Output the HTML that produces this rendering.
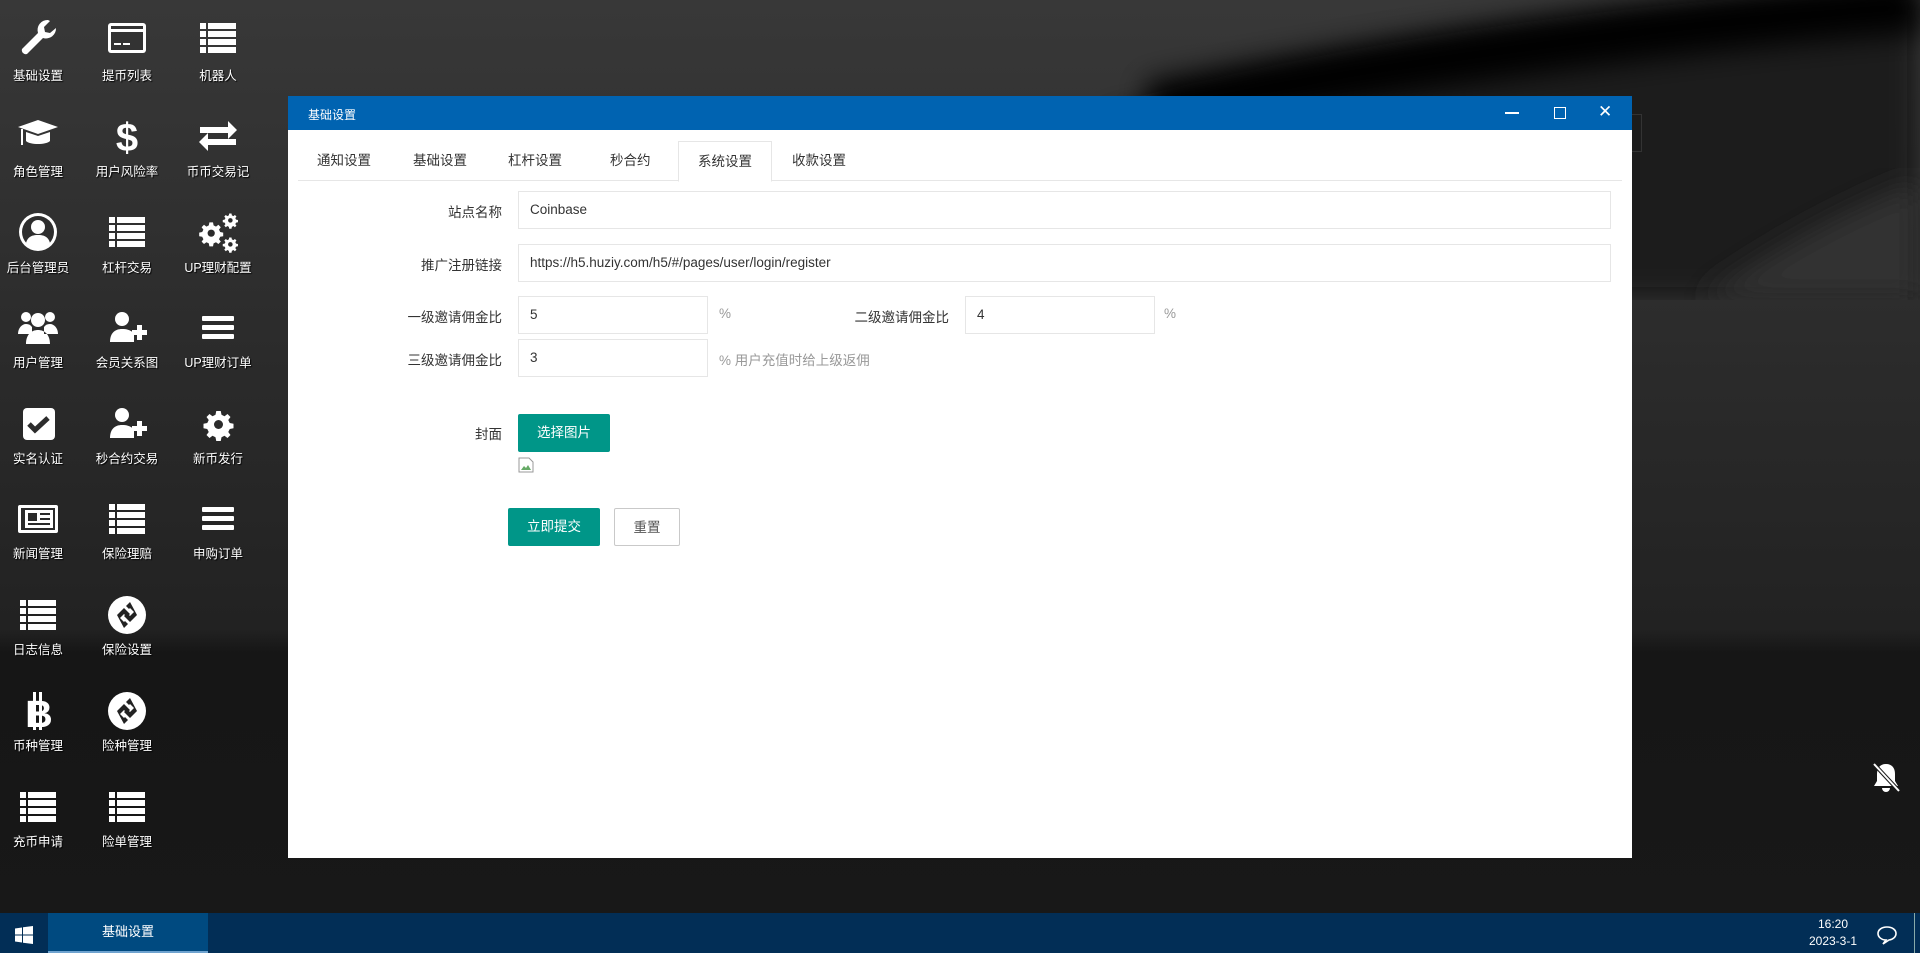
<!DOCTYPE html>
<html><head><meta charset="utf-8"><style>
*{margin:0;padding:0;box-sizing:border-box}
body{width:1920px;height:953px;overflow:hidden;position:relative;font-family:"Liberation Sans","Noto Sans CJK SC",sans-serif;
background:linear-gradient(180deg,#383838 0%,#2a2a2a 40%,#222 66%,#161616 68.5%,#181818 100%);}
.ic{position:absolute;width:90px;text-align:center;color:#fff;font-size:12.5px}
.ic svg{position:absolute;left:23px;width:44px;height:44px}
.ic span{position:absolute;left:0;width:90px;text-shadow:1px 1px 1px #000}
.win{position:absolute;left:288px;top:96px;width:1344px;height:762px;background:#fff}
.tb{height:34px;background:#0063b1;color:#fff;font-size:12px;padding:10px 20px;position:relative}
.tb .c{position:absolute;top:0;height:34px;color:#fff}
.tabs{position:absolute;top:45px;left:10px;right:10px;height:40px;border-bottom:1px solid #e6e6e6}
.tab{position:absolute;top:0;height:40px;line-height:40px;font-size:13.5px;color:#333}
.tab.a{border:1px solid #e6e6e6;border-bottom:1px solid #fff;background:#fff;height:41px;padding:0 19px}
.lb{position:absolute;font-size:13.5px;color:#333;text-align:right;width:200px}
.in{position:absolute;border:1px solid #e6e6e6;height:38px;line-height:36px;padding-left:11px;font-size:13.5px;color:#333}
.g{position:absolute;font-size:13.5px;color:#999}
.btn{position:absolute;height:38px;line-height:38px;text-align:center;color:#fff;background:#009688;font-size:13.5px;border-radius:2px}
.task{position:absolute;left:0;top:913px;width:1920px;height:40px;background:#022e56}
</style></head><body>
<svg style="position:absolute;left:0;top:0" width="1920" height="300" viewBox="0 0 1920 300">
<defs><filter id="bl"><feGaussianBlur stdDeviation="14"/></filter><linearGradient id="lg" x1="0" y1="0" x2="0" y2="1"><stop offset="0" stop-color="#3a3a3a"/><stop offset="1" stop-color="#333"/></linearGradient></defs>
<path d="M1100 120 C1400 40 1700 10 1920 0 L1920 300 L1100 300 Z" fill="#1c1c1c" filter="url(#bl)"/>
<path d="M1150 110 C1400 60 1700 20 1920 5" stroke="#030303" stroke-width="55" fill="none" filter="url(#bl)"/>
<path d="M1700 300 C1800 230 1870 200 1920 180 L1920 300Z" fill="#333" filter="url(#bl)"/>
</svg>
<svg width="0" height="0" style="position:absolute"><defs>
<g id="list"><rect x="4" y="7" width="6" height="6"/><rect x="12" y="7" width="28" height="6"/><rect x="4" y="15" width="6" height="6"/><rect x="12" y="15" width="28" height="6"/><rect x="4" y="23" width="6" height="6"/><rect x="12" y="23" width="28" height="6"/><rect x="4" y="31" width="6" height="6"/><rect x="12" y="31" width="28" height="6"/></g>
<g id="bars"><rect x="6" y="10" width="32" height="5" rx="1"/><rect x="6" y="19" width="32" height="5" rx="1"/><rect x="6" y="28" width="32" height="5" rx="1"/></g>
<g id="adduser"><circle cx="17" cy="13" r="7"/><path d="M5 36c0-9 5-13 12-13s10 2 12 5v8z"/><rect x="27" y="24" width="15" height="5"/><rect x="32" y="19" width="5" height="15"/></g>
<g id="link"><circle cx="22" cy="22" r="19"/><path d="M12 22l7-7 6 6-3 3-3-3-4 4 4 4 1-1 3 3-4 4zM32 22l-7 7-6-6 3-3 3 3 4-4-4-4-1 1-3-3 4-4z" fill="#222"/></g>
<g id="gear"><path d="M19 4h6l1 5 4 2 4-3 4 4-3 4 2 4 5 1v6l-5 1-2 4 3 4-4 4-4-3-4 2-1 5h-6l-1-5-4-2-4 3-4-4 3-4-2-4-5-1v-6l5-1 2-4-3-4 4-4 4 3 4-2z"/><circle cx="22" cy="22" r="6" fill="#2b2b2b"/></g>
</defs></svg>
<div style="fill:#fff">
<div class="ic" style="left:-7px;top:16px"><svg viewBox="0 0 44 44"><path d="M32 4a10 10 0 0 0-10 13L6 33a4 4 0 0 0 5 5l16-16a10 10 0 0 0 13-10l-6 5-5-1-1-5 6-6z" fill="#fff"/></svg><span style="top:49px">基础设置</span></div>
<div class="ic" style="left:82px;top:16px"><svg viewBox="0 0 44 44"><rect x="3" y="7" width="38" height="30" rx="3" fill="#fff"/><rect x="6" y="16" width="32" height="18" fill="#333"/><rect x="6" y="10" width="32" height="3" fill="#333"/><rect x="9" y="27" width="7" height="2" fill="#fff"/><rect x="18" y="27" width="7" height="2" fill="#fff"/></svg><span style="top:49px">提币列表</span></div>
<div class="ic" style="left:173px;top:16px"><svg viewBox="0 0 44 44"><use href="#list"/></svg><span style="top:49px">机器人</span></div>

<div class="ic" style="left:-7px;top:113px"><svg viewBox="0 0 44 44"><path d="M2 14L22 7l20 7-20 7z"/><path d="M10 19v9c4 4 20 4 24 0v-9l-12 4z"/><rect x="5" y="16" width="2" height="16"/></svg><span style="top:48px">角色管理</span></div>
<div class="ic" style="left:82px;top:113px"><svg viewBox="0 0 44 44"><text x="22" y="38" text-anchor="middle" font-size="40" font-weight="bold" fill="#fff" font-family="Liberation Sans">$</text></svg><span style="top:48px">用户风险率</span></div>
<div class="ic" style="left:173px;top:113px"><svg viewBox="0 0 44 44"><path d="M4 14h28v-6l9 9-9 9v-6H4zM40 26H12v-6l-9 9 9 9v-6h28z"/></svg><span style="top:48px">币币交易记</span></div>

<div class="ic" style="left:-7px;top:210px"><svg viewBox="0 0 44 44"><circle cx="22" cy="22" r="19"/><circle cx="22" cy="22" r="16" fill="#2e2e2e"/><circle cx="22" cy="17" r="7"/><path d="M10 33c2-7 7-8 12-8s10 1 12 8a16 16 0 0 1-24 0z"/></svg><span style="top:47px">后台管理员</span></div>
<div class="ic" style="left:82px;top:210px"><svg viewBox="0 0 44 44"><use href="#list"/></svg><span style="top:47px">杠杆交易</span></div>
<div class="ic" style="left:173px;top:210px"><svg viewBox="0 0 44 44"><g transform="translate(2,10) scale(.6)"><use href="#gear"/></g><g transform="translate(26,2) scale(.38)"><use href="#gear"/></g><g transform="translate(26,26) scale(.38)"><use href="#gear"/></g></svg><span style="top:47px">UP理财配置</span></div>

<div class="ic" style="left:-7px;top:306px"><svg viewBox="0 0 44 44"><circle cx="10" cy="11" r="5"/><circle cx="34" cy="11" r="5"/><circle cx="22" cy="14" r="7"/><path d="M2 28c0-6 4-10 8-10s5 2 6 3v7zM42 28c0-6-4-10-8-10s-5 2-6 3v7zM10 38c0-10 6-14 12-14s12 4 12 14z"/></svg><span style="top:46px">用户管理</span></div>
<div class="ic" style="left:82px;top:306px"><svg viewBox="0 0 44 44"><use href="#adduser"/></svg><span style="top:46px">会员关系图</span></div>
<div class="ic" style="left:173px;top:306px"><svg viewBox="0 0 44 44"><use href="#bars"/></svg><span style="top:46px">UP理财订单</span></div>

<div class="ic" style="left:-7px;top:402px"><svg viewBox="0 0 44 44"><rect x="7" y="6" width="32" height="32" rx="4"/><path d="M13 22l6 6 13-12" stroke="#2c2c2c" stroke-width="5" fill="none"/></svg><span style="top:46px">实名认证</span></div>
<div class="ic" style="left:82px;top:402px"><svg viewBox="0 0 44 44"><use href="#adduser"/></svg><span style="top:46px">秒合约交易</span></div>
<div class="ic" style="left:173px;top:402px"><svg viewBox="0 0 44 44"><g transform="translate(6,6) scale(.75)"><use href="#gear"/></g></svg><span style="top:46px">新币发行</span></div>

<div class="ic" style="left:-7px;top:497px"><svg viewBox="0 0 44 44"><rect x="2" y="8" width="40" height="28" rx="2"/><rect x="5" y="11" width="34" height="22" fill="#2a2a2a"/><rect x="9" y="13" width="28" height="18"/><rect x="12" y="16" width="9" height="8" fill="#2a2a2a"/><rect x="24" y="16" width="10" height="2" fill="#2a2a2a"/><rect x="24" y="21" width="10" height="2" fill="#2a2a2a"/><rect x="12" y="26" width="22" height="2" fill="#2a2a2a"/></svg><span style="top:46px">新闻管理</span></div>
<div class="ic" style="left:82px;top:497px"><svg viewBox="0 0 44 44"><use href="#list"/></svg><span style="top:46px">保险理赔</span></div>
<div class="ic" style="left:173px;top:497px"><svg viewBox="0 0 44 44"><use href="#bars"/></svg><span style="top:46px">申购订单</span></div>

<div class="ic" style="left:-7px;top:593px"><svg viewBox="0 0 44 44"><use href="#list"/></svg><span style="top:46px">日志信息</span></div>
<div class="ic" style="left:82px;top:593px"><svg viewBox="0 0 44 44"><use href="#link"/></svg><span style="top:46px">保险设置</span></div>

<div class="ic" style="left:-7px;top:689px"><svg viewBox="0 0 44 44"><text x="23" y="38" text-anchor="middle" font-size="38" font-weight="bold" fill="#fff" font-family="Liberation Sans">B</text><rect x="17" y="3" width="3" height="38"/><rect x="23" y="3" width="3" height="38"/></svg><span style="top:46px">币种管理</span></div>
<div class="ic" style="left:82px;top:689px"><svg viewBox="0 0 44 44"><use href="#link"/></svg><span style="top:46px">险种管理</span></div>

<div class="ic" style="left:-7px;top:785px"><svg viewBox="0 0 44 44"><use href="#list"/></svg><span style="top:46px">充币申请</span></div>
<div class="ic" style="left:82px;top:785px"><svg viewBox="0 0 44 44"><use href="#list"/></svg><span style="top:46px">险单管理</span></div>
</div>

<div style="position:absolute;left:1632px;top:114px;width:10px;height:38px;border:1px solid #333;border-left:none"></div>

<div class="win">
<div class="tb">基础设置
<span class="c" style="left:1217px;top:16px;width:14px;height:2px;background:#fff"></span>
<span class="c" style="left:1266px;top:11px;width:12px;height:12px;border:1.5px solid #fff;background:none"></span>
<span class="c" style="left:1310px;top:6px;font-size:17px;line-height:20px">✕</span>
</div>
<div class="tabs">
<div class="tab" style="left:19px">通知设置</div>
<div class="tab" style="left:115px">基础设置</div>
<div class="tab" style="left:210px">杠杆设置</div>
<div class="tab" style="left:312px">秒合约</div>
<div class="tab a" style="left:380px">系统设置</div>
<div class="tab" style="left:494px">收款设置</div>
</div>
<div class="lb" style="left:14px;top:105px">站点名称</div>
<div class="in" style="left:230px;top:95px;width:1093px">Coinbase</div>
<div class="lb" style="left:14px;top:158px">推广注册链接</div>
<div class="in" style="left:230px;top:148px;width:1093px">https://h5.huziy.com/h5/#/pages/user/login/register</div>
<div class="lb" style="left:14px;top:210px">一级邀请佣金比</div>
<div class="in" style="left:230px;top:200px;width:190px">5</div>
<div class="g" style="left:431px;top:210px">%</div>
<div class="lb" style="left:461px;top:210px">二级邀请佣金比</div>
<div class="in" style="left:677px;top:200px;width:190px">4</div>
<div class="g" style="left:876px;top:210px">%</div>
<div class="lb" style="left:14px;top:253px">三级邀请佣金比</div>
<div class="in" style="left:230px;top:243px;width:190px">3</div>
<div class="g" style="left:431px;top:253px">% 用户充值时给上级返佣</div>
<div class="lb" style="left:14px;top:327px">封面</div>
<div class="btn" style="left:230px;top:318px;width:92px">选择图片</div>
<svg style="position:absolute;left:230px;top:361px" width="16" height="16" viewBox="0 0 16 16"><path d="M1 1h10l4 4v10H1z" fill="#fff" stroke="#999"/><path d="M3 13l3-4 2 2 2-3 3 5z" fill="#6a6"/></svg>
<div class="btn" style="left:220px;top:412px;width:92px">立即提交</div>
<div class="btn" style="left:326px;top:412px;width:66px;background:#fff;color:#555;border:1px solid #c9c9c9">重置</div>
</div>

<svg style="position:absolute;left:1870px;top:760px" width="32" height="34" viewBox="0 0 32 34"><path d="M16 4c-6 0-9 4-9 10v7l-3 5h24l-3-5v-7c0-6-3-10-9-10zM12 28a4 4 0 0 0 8 0z" fill="#fff"/><path d="M3 3l26 28" stroke="#1b1b1b" stroke-width="4"/><path d="M4 4l25 27" stroke="#fff" stroke-width="2"/></svg>

<div class="task">
<svg style="position:absolute;left:15px;top:13px" width="18" height="18" viewBox="0 0 18 18" fill="#fff"><path d="M0 2.5l7-1v7H0zM8 1.3L18 0v8.5H8zM0 9.5h7v7l-7-1zM8 9.5h10V18L8 16.7z"/></svg>
<div style="position:absolute;left:48px;top:0;width:160px;height:40px;background:#004a80;border-bottom:2px solid #6fa3cf;color:#fff;font-size:13px;text-align:center;line-height:38px">基础设置</div>
<div style="position:absolute;left:1800px;top:3px;width:66px;text-align:center;color:#fff;font-size:12px;line-height:17px">16:20<br>2023-3-1</div>
<svg style="position:absolute;left:1876px;top:12px" width="22" height="20" viewBox="0 0 22 20"><path d="M11 2C5.5 2 2 5 2 8.5c0 3.5 3.5 6.5 8 6.5l-3 4 6-4c4-.5 7-3.2 7-6.5C20 5 16.5 2 11 2z" fill="none" stroke="#fff" stroke-width="1.6"/></svg>
<div style="position:absolute;left:1914px;top:0;width:1px;height:40px;background:#8aa"></div>
</div>
</body></html>
